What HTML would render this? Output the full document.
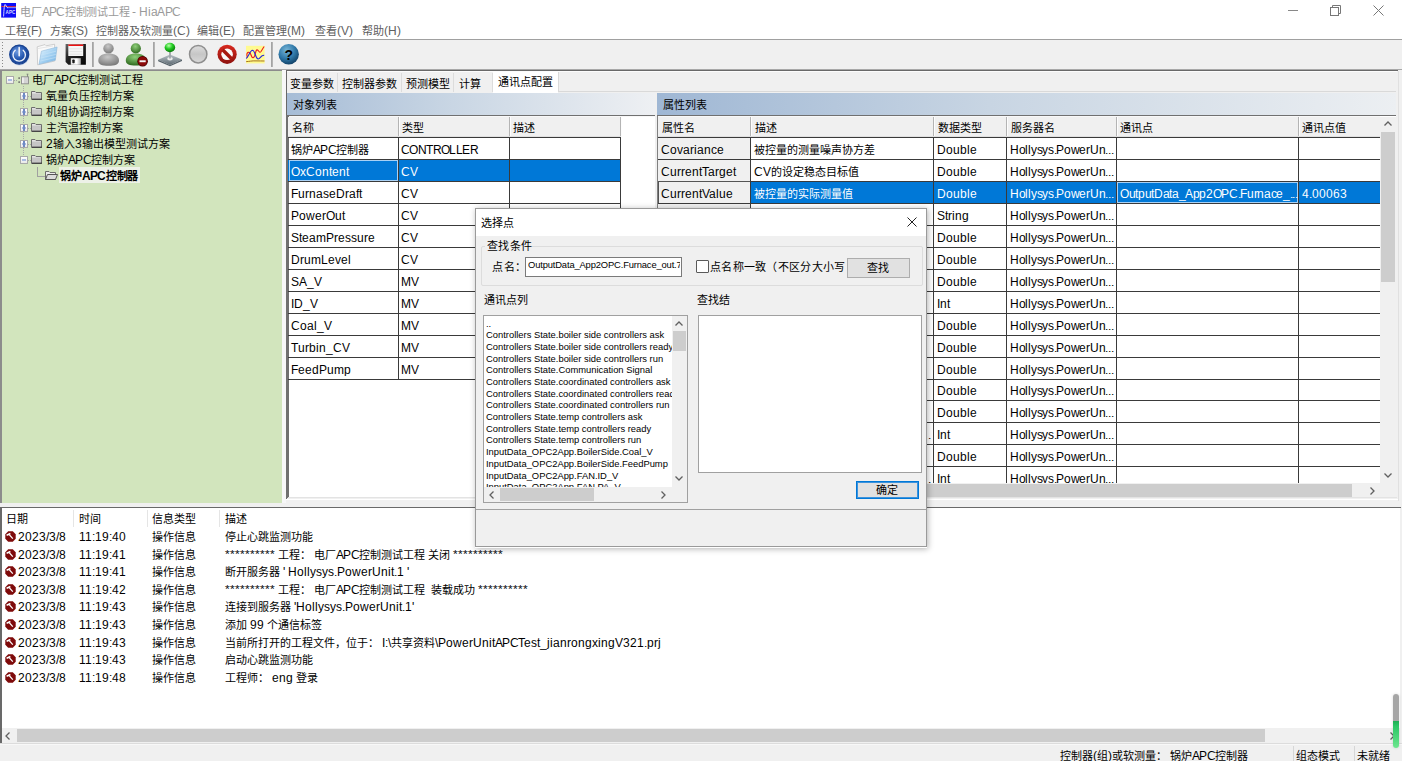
<!DOCTYPE html>
<html lang="zh-CN">
<head>
<meta charset="utf-8">
<style>
*{margin:0;padding:0;box-sizing:border-box}
html,body{width:1402px;height:761px;overflow:hidden;background:#f0f0f0}
body{position:relative;font-family:"UIL","Liberation Sans",sans-serif;font-size:11px;color:#000}
@font-face{font-family:"UIL";src:local("Liberation Sans");size-adjust:109%}
@font-face{font-family:"UILB";src:local("Liberation Sans Bold");size-adjust:109%}
.a{position:absolute}
.t{position:absolute;white-space:nowrap;line-height:16px;height:16px}
svg{position:absolute;overflow:visible}
</style>
</head>
<body>
<div class="a" style="left:0px;top:0px;width:1402px;height:39px;background:#fff;"></div>
<svg style="left:1px;top:3px" width="16" height="15" viewBox="1 3 16 15">
<rect x="1.2" y="3" width="14.8" height="14.6" fill="#0c0cf8"/>
<rect x="1.2" y="6.1" width="14.8" height="0.9" fill="#d23040"/>
<rect x="8" y="7.4" width="8" height="0.7" fill="#c8c8ff"/>
<path d="M3.6 16.5 C4 9 4.3 4.6 5 4.4 C5.8 4.3 6.4 7.8 8 8" stroke="#e8e8ff" stroke-width="0.9" fill="none"/>
<text x="5.6" y="14.2" font-size="4.6" fill="#d8d8ff" font-family="Liberation Sans" font-weight="bold">APC</text>
</svg>
<div class="t" style="left:20px;top:4px;font-size:11px;color:#9a9a9a;letter-spacing:-0.2px">电厂<span style="letter-spacing:-0.6px">APC</span>控制测试工程 - Hia<span style="letter-spacing:-0.6px">APC</span></div>
<div class="a" style="left:1288px;top:10px;width:10px;height:1px;background:#888;"></div>
<svg style="left:1330px;top:5px" width="11" height="11" viewBox="0 0 11 11"><rect x="0.5" y="2.5" width="8" height="8" fill="none" stroke="#777"/><path d="M2.5 2.5 V0.5 H10.5 V8.5 H8.5" fill="none" stroke="#777"/></svg>
<svg style="left:1373px;top:5px" width="11" height="11" viewBox="0 0 11 11"><path d="M0.5 0.5 L10.5 10.5 M10.5 0.5 L0.5 10.5" stroke="#777" stroke-width="1"/></svg>
<div class="t" style="left:5px;top:23px;font-size:11px;color:#606060;">工程(F)</div>
<div class="t" style="left:50px;top:23px;font-size:11px;color:#606060;">方案(S)</div>
<div class="t" style="left:96px;top:23px;font-size:11px;color:#606060;">控制器及软测量(C)</div>
<div class="t" style="left:197px;top:23px;font-size:11px;color:#606060;">编辑(E)</div>
<div class="t" style="left:243px;top:23px;font-size:11px;color:#606060;">配置管理(M)</div>
<div class="t" style="left:315px;top:23px;font-size:11px;color:#606060;">查看(V)</div>
<div class="t" style="left:362px;top:23px;font-size:11px;color:#606060;">帮助(H)</div>
<div class="a" style="left:0px;top:39px;width:1402px;height:1px;background:#a0a0a0;"></div>
<div class="a" style="left:0px;top:40px;width:1402px;height:30px;background:#f0f0f0;"></div>
<div class="a" style="left:2px;top:42px;width:1px;height:1px;background:#8a8a8a;"></div>
<div class="a" style="left:2px;top:45px;width:1px;height:1px;background:#8a8a8a;"></div>
<div class="a" style="left:2px;top:48px;width:1px;height:1px;background:#8a8a8a;"></div>
<div class="a" style="left:2px;top:51px;width:1px;height:1px;background:#8a8a8a;"></div>
<div class="a" style="left:2px;top:54px;width:1px;height:1px;background:#8a8a8a;"></div>
<div class="a" style="left:2px;top:57px;width:1px;height:1px;background:#8a8a8a;"></div>
<div class="a" style="left:2px;top:60px;width:1px;height:1px;background:#8a8a8a;"></div>
<div class="a" style="left:2px;top:63px;width:1px;height:1px;background:#8a8a8a;"></div>
<div class="a" style="left:2px;top:66px;width:1px;height:1px;background:#8a8a8a;"></div>
<div class="a" style="left:0px;top:69px;width:1402px;height:1px;background:#a8a8a8;"></div>
<div class="a" style="left:92px;top:42px;width:2px;height:25px;background:#b4b4b4;"></div>
<div class="a" style="left:92px;top:42px;width:1px;height:25px;background:#a4a4a4;"></div>
<div class="a" style="left:153px;top:42px;width:2px;height:25px;background:#b4b4b4;"></div>
<div class="a" style="left:153px;top:42px;width:1px;height:25px;background:#a4a4a4;"></div>
<div class="a" style="left:271px;top:42px;width:2px;height:25px;background:#b4b4b4;"></div>
<div class="a" style="left:271px;top:42px;width:1px;height:25px;background:#a4a4a4;"></div>
<svg style="left:0;top:40px" width="310" height="30" viewBox="0 40 310 30">
<defs>
<radialGradient id="gPow" cx="40%" cy="35%" r="70%"><stop offset="0" stop-color="#6f9be0"/><stop offset="0.55" stop-color="#2457b0"/><stop offset="1" stop-color="#173e8a"/></radialGradient>
<linearGradient id="gFold" x1="0" y1="0" x2="1" y2="1"><stop offset="0" stop-color="#e8f6ff"/><stop offset="0.5" stop-color="#a6d2f2"/><stop offset="1" stop-color="#6fb0e4"/></linearGradient>
<radialGradient id="gUser" cx="45%" cy="30%" r="70%"><stop offset="0" stop-color="#c8c8c8"/><stop offset="1" stop-color="#7a7a7a"/></radialGradient>
<radialGradient id="gUserG" cx="45%" cy="30%" r="70%"><stop offset="0" stop-color="#8fd07a"/><stop offset="1" stop-color="#2f6a1f"/></radialGradient>
<radialGradient id="gBall" cx="40%" cy="30%" r="70%"><stop offset="0" stop-color="#b8ffa8"/><stop offset="0.5" stop-color="#22cc22"/><stop offset="1" stop-color="#0a7a0a"/></radialGradient>
<linearGradient id="gBase" x1="0" y1="0" x2="0" y2="1"><stop offset="0" stop-color="#b9c2c8"/><stop offset="1" stop-color="#5e6a72"/></linearGradient>
<linearGradient id="gGrey" x1="0" y1="0" x2="0" y2="1"><stop offset="0" stop-color="#d6d6d6"/><stop offset="1" stop-color="#b4b4b4"/></linearGradient>
<radialGradient id="gRed" cx="45%" cy="35%" r="65%"><stop offset="0" stop-color="#e24a3a"/><stop offset="1" stop-color="#9e1410"/></radialGradient>
<radialGradient id="gHelp" cx="40%" cy="30%" r="70%"><stop offset="0" stop-color="#6aa8d0"/><stop offset="0.6" stop-color="#2a6a98"/><stop offset="1" stop-color="#153f63"/></radialGradient>
</defs>
<!-- power -->
<circle cx="19.4" cy="55" r="10.4" fill="#a9c0e6" opacity="0.55"/>
<circle cx="19.2" cy="54.6" r="9.5" fill="url(#gPow)"/>
<circle cx="19.2" cy="54.6" r="9.5" fill="none" stroke="#1a4390" stroke-width="1.2"/>
<path d="M15.2 50.2 A6.2 6.2 0 1 0 23.2 50.2" fill="none" stroke="#eef2fa" stroke-width="1.4" stroke-linecap="round"/>
<path d="M19.2 47.6 V55.8" stroke="#eef2fa" stroke-width="1.6" stroke-linecap="round"/>
<!-- folder -->
<path d="M37.2 46.8 L45 44.6 L46.2 45.8 L54.6 44.2 L54.8 61 L37.6 64.8 Z" fill="#fafafa" stroke="#bdbdbd" stroke-width="0.7"/>
<path d="M38 48.5 L53 46" stroke="#d0d0d0" stroke-width="0.5"/>
<path d="M41.4 51.2 L57.1 47 L55.3 60.2 L39 64.3 Z" fill="url(#gFold)" stroke="#8fb8da" stroke-width="0.6"/>
<path d="M41 55 L56 51.2 M40.6 58 L55.8 54.4 M40.2 61 L55.5 57.5" stroke="#c9e4f7" stroke-width="0.6"/>
<!-- floppy -->
<defs><linearGradient id="gFlop" x1="0" y1="0" x2="1" y2="1"><stop offset="0" stop-color="#6a6a6a"/><stop offset="0.35" stop-color="#262626"/><stop offset="1" stop-color="#050505"/></linearGradient>
<linearGradient id="gShut" x1="0" y1="0" x2="1" y2="0"><stop offset="0" stop-color="#e8e8e8"/><stop offset="0.6" stop-color="#ffffff"/><stop offset="1" stop-color="#a8a8a8"/></linearGradient></defs>
<path d="M65.6 44 H85.9 V64.8 H68.4 L65.6 62 Z" fill="url(#gFlop)"/>
<rect x="68.3" y="44.5" width="14.9" height="11.5" fill="#f6f6f6"/>
<rect x="68.3" y="44.5" width="14.9" height="1.5" fill="#ee1010"/>
<path d="M69.3 48.8 H82.2 M69.3 51.6 H82.2 M69.3 54.2 H82.2" stroke="#d6d6d6" stroke-width="0.6"/>
<rect x="70.8" y="58.2" width="10" height="6.6" fill="url(#gShut)"/>
<rect x="72.3" y="59.4" width="2.4" height="3.8" rx="0.8" fill="#1a1a1a"/>
<!-- grey user -->
<circle cx="108.5" cy="48.4" r="5.2" fill="url(#gUser)"/>
<path d="M98.3 60.5 C98.3 55.5 102.5 53.4 108.5 53.4 C114.6 53.4 119 55.5 119 60.5 C119 64.5 115 65.8 108.5 65.8 C102 65.8 98.3 64.5 98.3 60.5 Z" fill="url(#gUser)"/>
<!-- green user -->
<circle cx="135.8" cy="48.4" r="5.1" fill="url(#gUserG)"/>
<path d="M125.8 60.5 C125.8 55.5 129.8 53.4 135.8 53.4 C141.8 53.4 146 55.5 146 60.5 C146 64.5 142 65.5 135.8 65.5 C129.5 65.5 125.8 64.5 125.8 60.5 Z" fill="url(#gUserG)"/>
<circle cx="142.6" cy="61.2" r="5.3" fill="#4a0000"/>
<circle cx="142.6" cy="61.2" r="4.5" fill="#8c0a0a"/>
<rect x="139.5" y="60.3" width="6.2" height="1.9" fill="#f4f4f4"/>
<!-- joystick -->
<path d="M158.2 59.8 L170 54.4 L182 59.6 L170 65 Z" fill="url(#gBase)"/>
<path d="M158.2 59.8 L170 65 L182 59.6 L182 61 L170 66.3 L158.2 61.2 Z" fill="#56626a"/>
<ellipse cx="170" cy="58.8" rx="2.8" ry="1.8" fill="#ececec"/>
<rect x="169.1" y="51" width="1.8" height="7.5" fill="#a0a6aa"/>
<ellipse cx="169.9" cy="47.5" rx="5.3" ry="4.7" fill="url(#gBall)"/>
<!-- grey circle -->
<defs><linearGradient id="gGrey2" x1="0" y1="0" x2="0" y2="1"><stop offset="0" stop-color="#dedede"/><stop offset="0.5" stop-color="#c6c6c6"/><stop offset="1" stop-color="#d8d8d8"/></linearGradient></defs>
<circle cx="198.2" cy="54.2" r="8.7" fill="url(#gGrey2)" stroke="#8e8e8e" stroke-width="1.5"/>
<!-- red no -->
<defs><linearGradient id="gRed2" x1="0" y1="0" x2="0" y2="1"><stop offset="0" stop-color="#d8281e"/><stop offset="1" stop-color="#8e120e"/></linearGradient></defs>
<circle cx="227.1" cy="54.3" r="9.6" fill="url(#gRed2)"/>
<circle cx="227.1" cy="54.3" r="5.8" fill="#fafafa"/>
<path d="M222.6 49.8 L231.6 58.8" stroke="#a8180f" stroke-width="3.4"/>
<!-- chart -->
<rect x="246" y="45.8" width="18.6" height="17.6" fill="#fffa90"/>
<path d="M247.5 57.5 C246 54 247.5 51.5 249.5 52.5 C251.5 53.5 251 58.5 253.5 57.5 C256 56.5 255 49 257.5 50 C259 50.8 259.5 53.5 261 51.5 C262 50 263 48 264.2 46.5" fill="none" stroke="#ee1c1c" stroke-width="1.1"/>
<path d="M246.2 58.5 C248.5 57 250 50.5 252.5 50.3 C255 50.2 255.5 59 258.2 59 C260.5 59 260.5 55 264.2 55.2" fill="none" stroke="#2424dd" stroke-width="1.1"/>
<path d="M246.2 61.6 C249 61.6 252 60.6 256 60.9 C259 61.1 262 60.8 264.5 61" stroke="#a8741e" stroke-width="1" fill="none"/>
<!-- help -->
<defs><radialGradient id="gHelp2" cx="40%" cy="30%" r="75%"><stop offset="0" stop-color="#78b6d8"/><stop offset="0.55" stop-color="#2f78a8"/><stop offset="1" stop-color="#0e3b60"/></radialGradient></defs>
<circle cx="288.7" cy="54.3" r="10.2" fill="url(#gHelp2)"/>
<text x="288.9" y="59.6" font-size="14" font-weight="bold" font-family="Liberation Sans" text-anchor="middle" fill="#000">?</text>
</svg>
<div class="a" style="left:0px;top:70px;width:282px;height:434px;background:#8c8c8c;"></div>
<div class="a" style="left:2px;top:71px;width:280px;height:432px;background:#d2e5bd;"></div>
<div class="a" style="left:6px;top:76px;width:8px;height:8px;border:1px solid #a9a9a9;background:linear-gradient(180deg,#fff,#e8e8e8)"></div>
<div class="a" style="left:8px;top:79px;width:4px;height:2px;background:#a9bce2;"></div>
<div class="a" style="left:14px;top:80px;width:3px;height:1px;background:repeating-linear-gradient(90deg,#a8a8a8 0 1px,transparent 1px 2px)"></div>
<svg style="left:17px;top:73px" width="13" height="12" viewBox="0 0 13 12">
<rect x="4.5" y="3.8" width="7" height="7" fill="#d4d4d4" stroke="#8c8c8c" stroke-width="0.9"/>
<rect x="5.2" y="4.5" width="1.5" height="5.6" fill="#f4f4f4"/>
<rect x="1.3" y="4.4" width="1.7" height="1.4" fill="#666"/><rect x="1.3" y="8.4" width="1.7" height="1.4" fill="#666"/>
<path d="M10.5 3.8 V1.2 M9.6 1.2 H11.4" stroke="#777" stroke-width="0.8"/>
</svg>
<div class="t" style="left:32px;top:72px;font-size:11px;color:#000;">电厂<span style="letter-spacing:-0.6px">APC</span>控制测试工程</div>
<div class="a" style="left:23px;top:86px;width:1px;height:74px;background:repeating-linear-gradient(180deg,#a8a8a8 0 1px,transparent 1px 2px)"></div>
<div class="a" style="left:20px;top:92px;width:8px;height:8px;border:1px solid #a9a9a9;background:linear-gradient(180deg,#fff,#e8e8e8)"></div>
<div class="a" style="left:22px;top:95px;width:4px;height:2px;background:#a9bce2;"></div>
<div class="a" style="left:23px;top:93px;width:2px;height:6px;background:#6f8ac4;"></div>
<div class="a" style="left:28px;top:96px;width:3px;height:1px;background:repeating-linear-gradient(90deg,#a8a8a8 0 1px,transparent 1px 2px)"></div>
<svg style="left:31px;top:90px" width="12" height="10" viewBox="0 0 12 10">
<path d="M0.5 1.5 H4 L5 2.5 H10.5 V9.5 H0.5 Z" fill="#e4e4e4" stroke="#6e6e6e" stroke-width="1"/>
<path d="M1 3.5 H10 V8.8 H1 Z" fill="#c6c6c6"/>
<path d="M1 9.2 H11" stroke="#3c3c3c" stroke-width="1.2"/>
</svg>
<div class="t" style="left:46px;top:88px;font-size:11px;color:#000;">氧量负压控制方案</div>
<div class="a" style="left:20px;top:108px;width:8px;height:8px;border:1px solid #a9a9a9;background:linear-gradient(180deg,#fff,#e8e8e8)"></div>
<div class="a" style="left:22px;top:111px;width:4px;height:2px;background:#a9bce2;"></div>
<div class="a" style="left:23px;top:109px;width:2px;height:6px;background:#6f8ac4;"></div>
<div class="a" style="left:28px;top:112px;width:3px;height:1px;background:repeating-linear-gradient(90deg,#a8a8a8 0 1px,transparent 1px 2px)"></div>
<svg style="left:31px;top:106px" width="12" height="10" viewBox="0 0 12 10">
<path d="M0.5 1.5 H4 L5 2.5 H10.5 V9.5 H0.5 Z" fill="#e4e4e4" stroke="#6e6e6e" stroke-width="1"/>
<path d="M1 3.5 H10 V8.8 H1 Z" fill="#c6c6c6"/>
<path d="M1 9.2 H11" stroke="#3c3c3c" stroke-width="1.2"/>
</svg>
<div class="t" style="left:46px;top:104px;font-size:11px;color:#000;">机组协调控制方案</div>
<div class="a" style="left:20px;top:124px;width:8px;height:8px;border:1px solid #a9a9a9;background:linear-gradient(180deg,#fff,#e8e8e8)"></div>
<div class="a" style="left:22px;top:127px;width:4px;height:2px;background:#a9bce2;"></div>
<div class="a" style="left:23px;top:125px;width:2px;height:6px;background:#6f8ac4;"></div>
<div class="a" style="left:28px;top:128px;width:3px;height:1px;background:repeating-linear-gradient(90deg,#a8a8a8 0 1px,transparent 1px 2px)"></div>
<svg style="left:31px;top:122px" width="12" height="10" viewBox="0 0 12 10">
<path d="M0.5 1.5 H4 L5 2.5 H10.5 V9.5 H0.5 Z" fill="#e4e4e4" stroke="#6e6e6e" stroke-width="1"/>
<path d="M1 3.5 H10 V8.8 H1 Z" fill="#c6c6c6"/>
<path d="M1 9.2 H11" stroke="#3c3c3c" stroke-width="1.2"/>
</svg>
<div class="t" style="left:46px;top:120px;font-size:11px;color:#000;">主汽温控制方案</div>
<div class="a" style="left:20px;top:140px;width:8px;height:8px;border:1px solid #a9a9a9;background:linear-gradient(180deg,#fff,#e8e8e8)"></div>
<div class="a" style="left:22px;top:143px;width:4px;height:2px;background:#a9bce2;"></div>
<div class="a" style="left:23px;top:141px;width:2px;height:6px;background:#6f8ac4;"></div>
<div class="a" style="left:28px;top:144px;width:3px;height:1px;background:repeating-linear-gradient(90deg,#a8a8a8 0 1px,transparent 1px 2px)"></div>
<svg style="left:31px;top:138px" width="12" height="10" viewBox="0 0 12 10">
<path d="M0.5 1.5 H4 L5 2.5 H10.5 V9.5 H0.5 Z" fill="#e4e4e4" stroke="#6e6e6e" stroke-width="1"/>
<path d="M1 3.5 H10 V8.8 H1 Z" fill="#c6c6c6"/>
<path d="M1 9.2 H11" stroke="#3c3c3c" stroke-width="1.2"/>
</svg>
<div class="t" style="left:46px;top:136px;font-size:11px;color:#000;">2输入3输出模型测试方案</div>
<div class="a" style="left:20px;top:156px;width:8px;height:8px;border:1px solid #a9a9a9;background:linear-gradient(180deg,#fff,#e8e8e8)"></div>
<div class="a" style="left:22px;top:159px;width:4px;height:2px;background:#a9bce2;"></div>
<div class="a" style="left:28px;top:160px;width:3px;height:1px;background:repeating-linear-gradient(90deg,#a8a8a8 0 1px,transparent 1px 2px)"></div>
<svg style="left:31px;top:154px" width="12" height="10" viewBox="0 0 12 10">
<path d="M0.5 1.5 H4 L5 2.5 H10.5 V9.5 H0.5 Z" fill="#e4e4e4" stroke="#6e6e6e" stroke-width="1"/>
<path d="M1 3.5 H10 V8.8 H1 Z" fill="#c6c6c6"/>
<path d="M1 9.2 H11" stroke="#3c3c3c" stroke-width="1.2"/>
</svg>
<div class="t" style="left:46px;top:152px;font-size:11px;color:#000;">锅炉<span style="letter-spacing:-0.6px">APC</span>控制方案</div>
<div class="a" style="left:37px;top:167px;width:1px;height:10px;background:#a0a0a0;"></div>
<div class="a" style="left:37px;top:176px;width:9px;height:1px;background:#a0a0a0;"></div>
<div class="a" style="left:59px;top:167px;width:81px;height:16px;background:#edf1e8;"></div>
<svg style="left:45px;top:170px" width="13" height="11" viewBox="0 0 13 11">
<path d="M0.5 1.5 H4 L5 2.5 H10.5 V9.5 H0.5 Z" fill="#ececec" stroke="#6e6e6e"/>
<path d="M2.5 4.5 H12.5 L10.5 9.5 H0.5 Z" fill="#dcdcdc" stroke="#555"/>
</svg>
<div class="t" style="left:60px;top:168px;font-size:11px;color:#000;font-weight:bold;letter-spacing:-0.2px;font-family:'UILB','Liberation Sans',sans-serif">锅炉<span style="letter-spacing:-0.6px">APC</span>控制器</div>
<div class="a" style="left:282px;top:70px;width:4px;height:434px;background:#f7f7f8;"></div>
<div class="a" style="left:286px;top:70px;width:1112px;height:1px;background:#696969;"></div>
<div class="a" style="left:286px;top:70px;width:1px;height:429px;background:#696969;"></div>
<div class="a" style="left:287px;top:71px;width:1111px;height:432px;background:#f0f0f0;"></div>
<div class="a" style="left:1398px;top:71px;width:1px;height:430px;background:#e0e0e0;"></div>
<div class="t" style="left:290px;top:76px;font-size:11px;color:#000;">变量参数</div>
<div class="a" style="left:337px;top:73px;width:1px;height:19px;background:#dcdcdc;"></div>
<div class="t" style="left:342px;top:76px;font-size:11px;color:#000;">控制器参数</div>
<div class="a" style="left:401px;top:73px;width:1px;height:19px;background:#dcdcdc;"></div>
<div class="t" style="left:406px;top:76px;font-size:11px;color:#000;">预测模型</div>
<div class="a" style="left:453px;top:73px;width:1px;height:19px;background:#dcdcdc;"></div>
<div class="t" style="left:459px;top:76px;font-size:11px;color:#000;">计算</div>
<div class="a" style="left:492px;top:73px;width:1px;height:19px;background:#dcdcdc;"></div>
<div class="a" style="left:287px;top:71px;width:1110px;height:1px;background:#fcfcfc;"></div>
<div class="a" style="left:558px;top:72px;width:1px;height:20px;background:#d9d9d9;"></div>
<div class="a" style="left:558px;top:91px;width:838px;height:1px;background:#d9d9d9;"></div>
<div class="a" style="left:493px;top:72px;width:65px;height:21px;background:#fff;"></div>
<div class="t" style="left:498px;top:74px;font-size:11px;color:#000;">通讯点配置</div>
<div class="a" style="left:287px;top:93px;width:368px;height:22px;background:linear-gradient(90deg,#a6bcd6 0%,#c9d6e4 45%,#eef0f3 100%);"></div>
<div class="t" style="left:293px;top:97px;font-size:11px;color:#000;">对象列表</div>
<div class="a" style="left:657px;top:93px;width:739px;height:22px;background:linear-gradient(90deg,#9fb7d4 0%,#c8d5e3 45%,#eceff2 100%);"></div>
<div class="t" style="left:663px;top:97px;font-size:11px;color:#000;">属性列表</div>
<div class="a" style="left:288px;top:115px;width:367px;height:383px;background:#fff;"></div>
<div class="a" style="left:286px;top:115px;width:3px;height:383px;background:#707070;"></div>
<div class="a" style="left:286px;top:115px;width:369px;height:1px;background:#707070;"></div>
<div class="a" style="left:289px;top:116px;width:366px;height:1px;background:#f8f8f8;"></div>
<div class="a" style="left:288px;top:117px;width:333px;height:20px;background:#f0f0f0;"></div>
<div class="a" style="left:398px;top:117px;width:1px;height:20px;background:#b4b4b4;"></div>
<div class="a" style="left:399px;top:117px;width:1px;height:20px;background:#fdfdfd;"></div>
<div class="a" style="left:509px;top:117px;width:1px;height:20px;background:#b4b4b4;"></div>
<div class="a" style="left:510px;top:117px;width:1px;height:20px;background:#fdfdfd;"></div>
<div class="a" style="left:620px;top:117px;width:1px;height:20px;background:#b4b4b4;"></div>
<div class="a" style="left:621px;top:117px;width:1px;height:20px;background:#fdfdfd;"></div>
<div class="a" style="left:288px;top:136px;width:333px;height:1px;background:#e0e0e0;"></div>
<div class="t" style="left:292px;top:120px;font-size:11px;color:#000;">名称</div>
<div class="t" style="left:402px;top:120px;font-size:11px;color:#000;">类型</div>
<div class="t" style="left:513px;top:120px;font-size:11px;color:#000;">描述</div>
<div class="t" style="left:291px;top:142px;font-size:11px;color:#000;">锅炉<span style="letter-spacing:-0.6px">APC</span>控制器</div>
<div class="t" style="left:401px;top:142px;font-size:11px;color:#000;letter-spacing:-0.6px">CONTROLLER</div>
<div class="a" style="left:288px;top:159px;width:333px;height:1px;background:#3a3a3a;"></div>
<div class="a" style="left:288px;top:160px;width:333px;height:21px;background:#0078d7;"></div>
<div class="a" style="left:289px;top:160px;width:109px;height:21px;border:1px solid #a9d1f5"></div>
<div class="t" style="left:291px;top:164px;font-size:11px;color:#fff;">OxContent</div>
<div class="t" style="left:401px;top:164px;font-size:11px;color:#fff;">CV</div>
<div class="a" style="left:288px;top:181px;width:333px;height:1px;background:#3a3a3a;"></div>
<div class="t" style="left:291px;top:186px;font-size:11px;color:#000;">FurnaseDraft</div>
<div class="t" style="left:401px;top:186px;font-size:11px;color:#000;">CV</div>
<div class="a" style="left:288px;top:203px;width:333px;height:1px;background:#3a3a3a;"></div>
<div class="t" style="left:291px;top:208px;font-size:11px;color:#000;">PowerOut</div>
<div class="t" style="left:401px;top:208px;font-size:11px;color:#000;">CV</div>
<div class="a" style="left:288px;top:225px;width:333px;height:1px;background:#3a3a3a;"></div>
<div class="t" style="left:291px;top:230px;font-size:11px;color:#000;">SteamPressure</div>
<div class="t" style="left:401px;top:230px;font-size:11px;color:#000;">CV</div>
<div class="a" style="left:288px;top:247px;width:333px;height:1px;background:#3a3a3a;"></div>
<div class="t" style="left:291px;top:252px;font-size:11px;color:#000;">DrumLevel</div>
<div class="t" style="left:401px;top:252px;font-size:11px;color:#000;">CV</div>
<div class="a" style="left:288px;top:269px;width:333px;height:1px;background:#3a3a3a;"></div>
<div class="t" style="left:291px;top:274px;font-size:11px;color:#000;">SA_V</div>
<div class="t" style="left:401px;top:274px;font-size:11px;color:#000;">MV</div>
<div class="a" style="left:288px;top:291px;width:333px;height:1px;background:#3a3a3a;"></div>
<div class="t" style="left:291px;top:296px;font-size:11px;color:#000;">ID_V</div>
<div class="t" style="left:401px;top:296px;font-size:11px;color:#000;">MV</div>
<div class="a" style="left:288px;top:313px;width:333px;height:1px;background:#3a3a3a;"></div>
<div class="t" style="left:291px;top:318px;font-size:11px;color:#000;">Coal_V</div>
<div class="t" style="left:401px;top:318px;font-size:11px;color:#000;">MV</div>
<div class="a" style="left:288px;top:335px;width:333px;height:1px;background:#3a3a3a;"></div>
<div class="t" style="left:291px;top:340px;font-size:11px;color:#000;">Turbin_CV</div>
<div class="t" style="left:401px;top:340px;font-size:11px;color:#000;">MV</div>
<div class="a" style="left:288px;top:357px;width:333px;height:1px;background:#3a3a3a;"></div>
<div class="t" style="left:291px;top:362px;font-size:11px;color:#000;">FeedPump</div>
<div class="t" style="left:401px;top:362px;font-size:11px;color:#000;">MV</div>
<div class="a" style="left:288px;top:379px;width:333px;height:1px;background:#3a3a3a;"></div>
<div class="a" style="left:288px;top:137px;width:333px;height:1px;background:#3a3a3a;"></div>
<div class="a" style="left:398px;top:137px;width:1px;height:243px;background:#3a3a3a;"></div>
<div class="a" style="left:509px;top:137px;width:1px;height:243px;background:#3a3a3a;"></div>
<div class="a" style="left:620px;top:137px;width:1px;height:243px;background:#3a3a3a;"></div>
<div class="a" style="left:288px;top:497px;width:367px;height:1px;background:#e3e3e3;"></div>
<div class="a" style="left:286px;top:499px;width:369px;height:1px;background:#fff;"></div>
<div class="a" style="left:657px;top:115px;width:739px;height:383px;background:#fff;"></div>
<div class="a" style="left:657px;top:115px;width:1px;height:383px;background:#808080;"></div>
<div class="a" style="left:657px;top:115px;width:739px;height:1px;background:#707070;"></div>
<div class="a" style="left:658px;top:116px;width:722px;height:1px;background:#f8f8f8;"></div>
<div class="a" style="left:658px;top:117px;width:722px;height:20px;background:#f0f0f0;"></div>
<div class="a" style="left:750px;top:117px;width:1px;height:20px;background:#b4b4b4;"></div>
<div class="a" style="left:751px;top:117px;width:1px;height:20px;background:#fdfdfd;"></div>
<div class="a" style="left:933px;top:117px;width:1px;height:20px;background:#b4b4b4;"></div>
<div class="a" style="left:934px;top:117px;width:1px;height:20px;background:#fdfdfd;"></div>
<div class="a" style="left:1006px;top:117px;width:1px;height:20px;background:#b4b4b4;"></div>
<div class="a" style="left:1007px;top:117px;width:1px;height:20px;background:#fdfdfd;"></div>
<div class="a" style="left:1116px;top:117px;width:1px;height:20px;background:#b4b4b4;"></div>
<div class="a" style="left:1117px;top:117px;width:1px;height:20px;background:#fdfdfd;"></div>
<div class="a" style="left:1298px;top:117px;width:1px;height:20px;background:#b4b4b4;"></div>
<div class="a" style="left:1299px;top:117px;width:1px;height:20px;background:#fdfdfd;"></div>
<div class="a" style="left:658px;top:136px;width:722px;height:1px;background:#e0e0e0;"></div>
<div class="t" style="left:662px;top:120px;font-size:11px;color:#000;">属性名</div>
<div class="t" style="left:755px;top:120px;font-size:11px;color:#000;">描述</div>
<div class="t" style="left:938px;top:120px;font-size:11px;color:#000;">数据类型</div>
<div class="t" style="left:1011px;top:120px;font-size:11px;color:#000;">服务器名</div>
<div class="t" style="left:1120px;top:120px;font-size:11px;color:#000;">通讯点</div>
<div class="t" style="left:1302px;top:120px;font-size:11px;color:#000;">通讯点值</div>
<div class="a" style="left:658px;top:138px;width:93px;height:21px;background:#f0f0f0;"></div>
<div class="t" style="left:661px;top:142px;font-size:11px;color:#000;">Covariance</div>
<div class="t" style="left:754px;top:142px;font-size:11px;color:#000;">被控量的测量噪声协方差</div>
<div class="t" style="left:937px;top:142px;font-size:11px;color:#000;">Double</div>
<div class="t" style="left:1010px;top:142px;font-size:11px;color:#000;letter-spacing:-0.3px">Hollysys.PowerUn...</div>
<div class="a" style="left:658px;top:159px;width:722px;height:1px;background:#3a3a3a;"></div>
<div class="a" style="left:658px;top:160px;width:93px;height:21px;background:#f0f0f0;"></div>
<div class="t" style="left:661px;top:164px;font-size:11px;color:#000;">CurrentTarget</div>
<div class="t" style="left:754px;top:164px;font-size:11px;color:#000;">CV的设定稳态目标值</div>
<div class="t" style="left:937px;top:164px;font-size:11px;color:#000;">Double</div>
<div class="t" style="left:1010px;top:164px;font-size:11px;color:#000;letter-spacing:-0.3px">Hollysys.PowerUn...</div>
<div class="a" style="left:658px;top:181px;width:722px;height:1px;background:#3a3a3a;"></div>
<div class="a" style="left:658px;top:182px;width:93px;height:21px;background:#f0f0f0;"></div>
<div class="a" style="left:751px;top:182px;width:629px;height:21px;background:#0078d7;"></div>
<div class="a" style="left:1117px;top:182px;width:181px;height:21px;border:1px solid #a9d1f5"></div>
<div class="a" style="left:658px;top:181px;width:93px;height:22px;border-left:1px solid #555;border-top:1px solid #555"></div>
<div class="t" style="left:661px;top:186px;font-size:11px;color:#000;">CurrentValue</div>
<div class="t" style="left:754px;top:186px;font-size:11px;color:#fff;">被控量的实际测量值</div>
<div class="t" style="left:937px;top:186px;font-size:11px;color:#fff;">Double</div>
<div class="t" style="left:1010px;top:186px;font-size:11px;color:#fff;letter-spacing:-0.3px">Hollysys.PowerUn...</div>
<div class="t" style="left:1120px;top:186px;font-size:11px;color:#fff;letter-spacing:-0.35px">OutputData_App2OPC.Furnace_...</div>
<div class="t" style="left:1302px;top:186px;font-size:11px;color:#fff;">4.00063</div>
<div class="a" style="left:658px;top:203px;width:722px;height:1px;background:#3a3a3a;"></div>
<div class="a" style="left:658px;top:204px;width:93px;height:21px;background:#f0f0f0;"></div>
<div class="t" style="left:937px;top:208px;font-size:11px;color:#000;">String</div>
<div class="t" style="left:1010px;top:208px;font-size:11px;color:#000;letter-spacing:-0.3px">Hollysys.PowerUn...</div>
<div class="a" style="left:658px;top:225px;width:722px;height:1px;background:#3a3a3a;"></div>
<div class="a" style="left:658px;top:226px;width:93px;height:21px;background:#f0f0f0;"></div>
<div class="t" style="left:937px;top:230px;font-size:11px;color:#000;">Double</div>
<div class="t" style="left:1010px;top:230px;font-size:11px;color:#000;letter-spacing:-0.3px">Hollysys.PowerUn...</div>
<div class="a" style="left:658px;top:247px;width:722px;height:1px;background:#3a3a3a;"></div>
<div class="a" style="left:658px;top:248px;width:93px;height:21px;background:#f0f0f0;"></div>
<div class="t" style="left:937px;top:252px;font-size:11px;color:#000;">Double</div>
<div class="t" style="left:1010px;top:252px;font-size:11px;color:#000;letter-spacing:-0.3px">Hollysys.PowerUn...</div>
<div class="a" style="left:658px;top:269px;width:722px;height:1px;background:#3a3a3a;"></div>
<div class="a" style="left:658px;top:270px;width:93px;height:21px;background:#f0f0f0;"></div>
<div class="t" style="left:937px;top:274px;font-size:11px;color:#000;">Double</div>
<div class="t" style="left:1010px;top:274px;font-size:11px;color:#000;letter-spacing:-0.3px">Hollysys.PowerUn...</div>
<div class="a" style="left:658px;top:291px;width:722px;height:1px;background:#3a3a3a;"></div>
<div class="a" style="left:658px;top:292px;width:93px;height:21px;background:#f0f0f0;"></div>
<div class="t" style="left:937px;top:296px;font-size:11px;color:#000;">Int</div>
<div class="t" style="left:1010px;top:296px;font-size:11px;color:#000;letter-spacing:-0.3px">Hollysys.PowerUn...</div>
<div class="a" style="left:658px;top:313px;width:722px;height:1px;background:#3a3a3a;"></div>
<div class="a" style="left:658px;top:314px;width:93px;height:21px;background:#f0f0f0;"></div>
<div class="t" style="left:937px;top:318px;font-size:11px;color:#000;">Double</div>
<div class="t" style="left:1010px;top:318px;font-size:11px;color:#000;letter-spacing:-0.3px">Hollysys.PowerUn...</div>
<div class="a" style="left:658px;top:335px;width:722px;height:1px;background:#3a3a3a;"></div>
<div class="a" style="left:658px;top:336px;width:93px;height:21px;background:#f0f0f0;"></div>
<div class="t" style="left:937px;top:340px;font-size:11px;color:#000;">Double</div>
<div class="t" style="left:1010px;top:340px;font-size:11px;color:#000;letter-spacing:-0.3px">Hollysys.PowerUn...</div>
<div class="a" style="left:658px;top:357px;width:722px;height:1px;background:#3a3a3a;"></div>
<div class="a" style="left:658px;top:358px;width:93px;height:21px;background:#f0f0f0;"></div>
<div class="t" style="left:937px;top:362px;font-size:11px;color:#000;">Double</div>
<div class="t" style="left:1010px;top:362px;font-size:11px;color:#000;letter-spacing:-0.3px">Hollysys.PowerUn...</div>
<div class="a" style="left:658px;top:379px;width:722px;height:1px;background:#3a3a3a;"></div>
<div class="a" style="left:658px;top:380px;width:93px;height:20px;background:#f0f0f0;"></div>
<div class="t" style="left:937px;top:383px;font-size:11px;color:#000;">Double</div>
<div class="t" style="left:1010px;top:383px;font-size:11px;color:#000;letter-spacing:-0.3px">Hollysys.PowerUn...</div>
<div class="a" style="left:658px;top:400px;width:722px;height:1px;background:#3a3a3a;"></div>
<div class="a" style="left:658px;top:401px;width:93px;height:21px;background:#f0f0f0;"></div>
<div class="t" style="left:937px;top:405px;font-size:11px;color:#000;">Double</div>
<div class="t" style="left:1010px;top:405px;font-size:11px;color:#000;letter-spacing:-0.3px">Hollysys.PowerUn...</div>
<div class="a" style="left:658px;top:422px;width:722px;height:1px;background:#3a3a3a;"></div>
<div class="a" style="left:658px;top:423px;width:93px;height:21px;background:#f0f0f0;"></div>
<div class="t" style="left:928px;top:427px;font-size:11px;color:#000;">.</div>
<div class="t" style="left:937px;top:427px;font-size:11px;color:#000;">Int</div>
<div class="t" style="left:1010px;top:427px;font-size:11px;color:#000;letter-spacing:-0.3px">Hollysys.PowerUn...</div>
<div class="a" style="left:658px;top:444px;width:722px;height:1px;background:#3a3a3a;"></div>
<div class="a" style="left:658px;top:445px;width:93px;height:21px;background:#f0f0f0;"></div>
<div class="t" style="left:937px;top:449px;font-size:11px;color:#000;">Double</div>
<div class="t" style="left:1010px;top:449px;font-size:11px;color:#000;letter-spacing:-0.3px">Hollysys.PowerUn...</div>
<div class="a" style="left:658px;top:466px;width:722px;height:1px;background:#3a3a3a;"></div>
<div class="a" style="left:658px;top:467px;width:93px;height:16px;background:#f0f0f0;"></div>
<div class="t" style="left:928px;top:471px;font-size:11px;color:#000;">.</div>
<div class="t" style="left:937px;top:471px;font-size:11px;color:#000;">Int</div>
<div class="t" style="left:1010px;top:471px;font-size:11px;color:#000;letter-spacing:-0.3px">Hollysys.PowerUn...</div>
<div class="a" style="left:658px;top:137px;width:722px;height:1px;background:#3a3a3a;"></div>
<div class="a" style="left:750px;top:137px;width:1px;height:346px;background:#3a3a3a;"></div>
<div class="a" style="left:933px;top:137px;width:1px;height:346px;background:#3a3a3a;"></div>
<div class="a" style="left:1006px;top:137px;width:1px;height:346px;background:#3a3a3a;"></div>
<div class="a" style="left:1116px;top:137px;width:1px;height:346px;background:#3a3a3a;"></div>
<div class="a" style="left:1298px;top:137px;width:1px;height:346px;background:#3a3a3a;"></div>
<div class="a" style="left:1380px;top:117px;width:16px;height:366px;background:#f0f0f0;"></div>
<div class="a" style="left:1381px;top:132px;width:14px;height:150px;background:#cdcdcd;"></div>
<svg style="left:1383px;top:120px" width="10" height="8" viewBox="0 0 10 8"><path d="M1.5 5.5 L5 2 L8.5 5.5" fill="none" stroke="#606060" stroke-width="1.3"/></svg>
<svg style="left:1383px;top:471px" width="10" height="8" viewBox="0 0 10 8"><path d="M1.5 2.5 L5 6 L8.5 2.5" fill="none" stroke="#606060" stroke-width="1.3"/></svg>
<div class="a" style="left:658px;top:483px;width:738px;height:15px;background:#f0f0f0;"></div>
<div class="a" style="left:658px;top:484px;width:694px;height:13px;background:#cdcdcd;"></div>
<svg style="left:1368px;top:486px" width="8" height="10" viewBox="0 0 8 10"><path d="M2.5 1.5 L6 5 L2.5 8.5" fill="none" stroke="#606060" stroke-width="1.3"/></svg>
<div class="a" style="left:657px;top:497px;width:740px;height:1px;background:#e3e3e3;"></div>
<div class="a" style="left:655px;top:499px;width:743px;height:1px;background:#fff;"></div>
<div class="a" style="left:0px;top:503px;width:1402px;height:4px;background:#f0f0f0;"></div>
<div class="a" style="left:0px;top:507px;width:1401px;height:1px;background:#696969;"></div>
<div class="a" style="left:0px;top:507px;width:2px;height:238px;background:#696969;"></div>
<div class="a" style="left:2px;top:508px;width:1399px;height:237px;background:#fff;"></div>
<div class="a" style="left:1400px;top:508px;width:1px;height:237px;background:#f0f0f0;"></div>
<div class="t" style="left:6px;top:511px;font-size:11px;color:#000;">日期</div>
<div class="t" style="left:79px;top:511px;font-size:11px;color:#000;">时间</div>
<div class="t" style="left:152px;top:511px;font-size:11px;color:#000;">信息类型</div>
<div class="t" style="left:225px;top:511px;font-size:11px;color:#000;">描述</div>
<div class="a" style="left:73px;top:510px;width:1px;height:17px;background:#e5e5e5;"></div>
<div class="a" style="left:147px;top:510px;width:1px;height:17px;background:#e5e5e5;"></div>
<div class="a" style="left:219px;top:510px;width:1px;height:17px;background:#e5e5e5;"></div>
<svg style="left:5px;top:531px" width="11" height="11" viewBox="0 0 11 11"><path d="M3.2 0.3 H7.8 L10.7 3.2 V7.8 L7.8 10.7 H3.2 L0.3 7.8 V3.2 Z" fill="#7e0a0a"/><path d="M1.6 4.2 L5.4 2.6" stroke="#fff" stroke-width="1.6"/><path d="M4.2 3.6 L7.8 7.6" stroke="#fff" stroke-width="1.3"/></svg>
<div class="t" style="left:18px;top:529px;font-size:11px;color:#000;">2023/3/8</div>
<div class="t" style="left:79px;top:529px;font-size:11px;color:#000;">11:19:40</div>
<div class="t" style="left:152px;top:529px;font-size:11px;color:#000;">操作信息</div>
<div class="t" style="left:225px;top:529px;font-size:11px;color:#000;">停止心跳监测功能</div>
<svg style="left:5px;top:549px" width="11" height="11" viewBox="0 0 11 11"><path d="M3.2 0.3 H7.8 L10.7 3.2 V7.8 L7.8 10.7 H3.2 L0.3 7.8 V3.2 Z" fill="#7e0a0a"/><path d="M1.6 4.2 L5.4 2.6" stroke="#fff" stroke-width="1.6"/><path d="M4.2 3.6 L7.8 7.6" stroke="#fff" stroke-width="1.3"/></svg>
<div class="t" style="left:18px;top:547px;font-size:11px;color:#000;">2023/3/8</div>
<div class="t" style="left:79px;top:547px;font-size:11px;color:#000;">11:19:41</div>
<div class="t" style="left:152px;top:547px;font-size:11px;color:#000;">操作信息</div>
<div class="t" style="left:225px;top:547px;font-size:11px;color:#000;">********** 工程：&nbsp;电厂<span style="letter-spacing:-0.6px">APC</span>控制测试工程 关闭 **********</div>
<svg style="left:5px;top:566px" width="11" height="11" viewBox="0 0 11 11"><path d="M3.2 0.3 H7.8 L10.7 3.2 V7.8 L7.8 10.7 H3.2 L0.3 7.8 V3.2 Z" fill="#7e0a0a"/><path d="M1.6 4.2 L5.4 2.6" stroke="#fff" stroke-width="1.6"/><path d="M4.2 3.6 L7.8 7.6" stroke="#fff" stroke-width="1.3"/></svg>
<div class="t" style="left:18px;top:564px;font-size:11px;color:#000;">2023/3/8</div>
<div class="t" style="left:79px;top:564px;font-size:11px;color:#000;">11:19:41</div>
<div class="t" style="left:152px;top:564px;font-size:11px;color:#000;">操作信息</div>
<div class="t" style="left:225px;top:564px;font-size:11px;color:#000;">断开服务器 ' Hollysys.PowerUnit.1 '</div>
<svg style="left:5px;top:584px" width="11" height="11" viewBox="0 0 11 11"><path d="M3.2 0.3 H7.8 L10.7 3.2 V7.8 L7.8 10.7 H3.2 L0.3 7.8 V3.2 Z" fill="#7e0a0a"/><path d="M1.6 4.2 L5.4 2.6" stroke="#fff" stroke-width="1.6"/><path d="M4.2 3.6 L7.8 7.6" stroke="#fff" stroke-width="1.3"/></svg>
<div class="t" style="left:18px;top:582px;font-size:11px;color:#000;">2023/3/8</div>
<div class="t" style="left:79px;top:582px;font-size:11px;color:#000;">11:19:42</div>
<div class="t" style="left:152px;top:582px;font-size:11px;color:#000;">操作信息</div>
<div class="t" style="left:225px;top:582px;font-size:11px;color:#000;">********** 工程：&nbsp;电厂<span style="letter-spacing:-0.6px">APC</span>控制测试工程&nbsp; 装载成功 **********</div>
<svg style="left:5px;top:601px" width="11" height="11" viewBox="0 0 11 11"><path d="M3.2 0.3 H7.8 L10.7 3.2 V7.8 L7.8 10.7 H3.2 L0.3 7.8 V3.2 Z" fill="#7e0a0a"/><path d="M1.6 4.2 L5.4 2.6" stroke="#fff" stroke-width="1.6"/><path d="M4.2 3.6 L7.8 7.6" stroke="#fff" stroke-width="1.3"/></svg>
<div class="t" style="left:18px;top:599px;font-size:11px;color:#000;">2023/3/8</div>
<div class="t" style="left:79px;top:599px;font-size:11px;color:#000;">11:19:43</div>
<div class="t" style="left:152px;top:599px;font-size:11px;color:#000;">操作信息</div>
<div class="t" style="left:225px;top:599px;font-size:11px;color:#000;">连接到服务器 'Hollysys.PowerUnit.1'</div>
<svg style="left:5px;top:619px" width="11" height="11" viewBox="0 0 11 11"><path d="M3.2 0.3 H7.8 L10.7 3.2 V7.8 L7.8 10.7 H3.2 L0.3 7.8 V3.2 Z" fill="#7e0a0a"/><path d="M1.6 4.2 L5.4 2.6" stroke="#fff" stroke-width="1.6"/><path d="M4.2 3.6 L7.8 7.6" stroke="#fff" stroke-width="1.3"/></svg>
<div class="t" style="left:18px;top:617px;font-size:11px;color:#000;">2023/3/8</div>
<div class="t" style="left:79px;top:617px;font-size:11px;color:#000;">11:19:43</div>
<div class="t" style="left:152px;top:617px;font-size:11px;color:#000;">操作信息</div>
<div class="t" style="left:225px;top:617px;font-size:11px;color:#000;">添加 99 个通信标签</div>
<svg style="left:5px;top:637px" width="11" height="11" viewBox="0 0 11 11"><path d="M3.2 0.3 H7.8 L10.7 3.2 V7.8 L7.8 10.7 H3.2 L0.3 7.8 V3.2 Z" fill="#7e0a0a"/><path d="M1.6 4.2 L5.4 2.6" stroke="#fff" stroke-width="1.6"/><path d="M4.2 3.6 L7.8 7.6" stroke="#fff" stroke-width="1.3"/></svg>
<div class="t" style="left:18px;top:635px;font-size:11px;color:#000;">2023/3/8</div>
<div class="t" style="left:79px;top:635px;font-size:11px;color:#000;">11:19:43</div>
<div class="t" style="left:152px;top:635px;font-size:11px;color:#000;">操作信息</div>
<div class="t" style="left:225px;top:635px;font-size:11px;color:#000;">当前所打开的工程文件，位于：&nbsp;I:\共享资料\PowerUnit<span style="letter-spacing:-0.6px">APC</span>Test_jianrongxingV321.prj</div>
<svg style="left:5px;top:654px" width="11" height="11" viewBox="0 0 11 11"><path d="M3.2 0.3 H7.8 L10.7 3.2 V7.8 L7.8 10.7 H3.2 L0.3 7.8 V3.2 Z" fill="#7e0a0a"/><path d="M1.6 4.2 L5.4 2.6" stroke="#fff" stroke-width="1.6"/><path d="M4.2 3.6 L7.8 7.6" stroke="#fff" stroke-width="1.3"/></svg>
<div class="t" style="left:18px;top:652px;font-size:11px;color:#000;">2023/3/8</div>
<div class="t" style="left:79px;top:652px;font-size:11px;color:#000;">11:19:43</div>
<div class="t" style="left:152px;top:652px;font-size:11px;color:#000;">操作信息</div>
<div class="t" style="left:225px;top:652px;font-size:11px;color:#000;">启动心跳监测功能</div>
<svg style="left:5px;top:672px" width="11" height="11" viewBox="0 0 11 11"><path d="M3.2 0.3 H7.8 L10.7 3.2 V7.8 L7.8 10.7 H3.2 L0.3 7.8 V3.2 Z" fill="#7e0a0a"/><path d="M1.6 4.2 L5.4 2.6" stroke="#fff" stroke-width="1.6"/><path d="M4.2 3.6 L7.8 7.6" stroke="#fff" stroke-width="1.3"/></svg>
<div class="t" style="left:18px;top:670px;font-size:11px;color:#000;">2023/3/8</div>
<div class="t" style="left:79px;top:670px;font-size:11px;color:#000;">11:19:48</div>
<div class="t" style="left:152px;top:670px;font-size:11px;color:#000;">操作信息</div>
<div class="t" style="left:225px;top:670px;font-size:11px;color:#000;">工程师：&nbsp;eng 登录</div>
<div class="a" style="left:2px;top:728px;width:1398px;height:15px;background:#f0f0f0;"></div>
<div class="a" style="left:17px;top:729px;width:1248px;height:13px;background:#cdcdcd;"></div>
<svg style="left:4px;top:731px" width="8" height="10" viewBox="0 0 8 10"><path d="M5.5 1.5 L2 5 L5.5 8.5" fill="none" stroke="#606060" stroke-width="1.3"/></svg>
<svg style="left:1388px;top:731px" width="8" height="10" viewBox="0 0 8 10"><path d="M2.5 1.5 L6 5 L2.5 8.5" fill="none" stroke="#606060" stroke-width="1.3"/></svg>
<div class="a" style="left:0px;top:743px;width:1402px;height:1px;background:#dcdcdc;"></div>
<div class="a" style="left:0px;top:744px;width:1402px;height:17px;background:#f0f0f0;"></div>
<div class="a" style="left:0px;top:744px;width:1402px;height:1px;background:#f8f8f8;"></div>
<div class="t" style="left:1060px;top:748px;font-size:11px;color:#000;">控制器(组)或软测量： 锅炉<span style="letter-spacing:-0.6px">APC</span>控制器</div>
<div class="a" style="left:1293px;top:746px;width:1px;height:15px;background:#d6d6d6;"></div>
<div class="t" style="left:1296px;top:748px;font-size:11px;color:#000;">组态模式</div>
<div class="a" style="left:1354px;top:746px;width:1px;height:15px;background:#d6d6d6;"></div>
<div class="t" style="left:1357px;top:748px;font-size:11px;color:#000;">未就绪</div>
<div class="a" style="left:1393px;top:694px;width:6px;height:54px;border-radius:3px;background:linear-gradient(180deg,#a6a6a6 0,#a6a6a6 50%,#1fae55 50%,#2cc766 60%,#6ee68f 100%);box-shadow:0 0 3px rgba(0,0,0,0.15)"></div>
<div class="a" style="left:475px;top:208px;width:452px;height:340px;box-shadow:1px 1px 6px rgba(0,0,0,0.3)"></div>
<div class="a" style="left:475px;top:208px;width:452px;height:339px;background:#9a9a9a;"></div>
<div class="a" style="left:476px;top:209px;width:450px;height:337px;background:#f0f0f0;"></div>
<div class="a" style="left:476px;top:209px;width:450px;height:27px;background:#fff;"></div>
<div class="t" style="left:481px;top:215px;font-size:11px;color:#000;">选择点</div>
<svg style="left:907px;top:217px" width="10" height="10" viewBox="0 0 10 10"><path d="M0.5 0.5 L9.5 9.5 M9.5 0.5 L0.5 9.5" stroke="#222" stroke-width="1"/></svg>
<div class="a" style="left:481px;top:246px;width:442px;height:40px;border:1px solid #dcdcdc;border-radius:2px"></div>
<div class="a" style="left:485px;top:239px;width:47px;height:12px;background:#f0f0f0;"></div>
<div class="t" style="left:487px;top:238px;font-size:11px;color:#000;letter-spacing:0.4px">查找条件</div>
<div class="t" style="left:492px;top:259px;font-size:11px;color:#000;letter-spacing:0.6px">点名：</div>
<div class="a" style="left:525px;top:257px;width:157px;height:20px;border:1px solid #7a7a7a;background:#fff;overflow:hidden"></div>
<div class="t" style="left:528px;top:257px;font-size:9.4px;color:#000;width:152px;overflow:hidden;font-family:Liberation Sans;letter-spacing:-0.15px">OutputData_App2OPC.Furnace_out.7</div>
<div class="a" style="left:696px;top:260px;width:13px;height:13px;border:1px solid #5a5a5a;border-radius:1px;background:#fff"></div>
<div class="t" style="left:710px;top:259px;font-size:11px;color:#000;width:136px;overflow:hidden;letter-spacing:0.3px">点名称一致（不区分大小写）</div>
<div class="a" style="left:847px;top:258px;width:63px;height:20px;border:1px solid #adadad;background:#e1e1e1"></div>
<div class="t" style="left:867px;top:260px;font-size:11px;color:#000;letter-spacing:0px">查找</div>
<div class="t" style="left:484px;top:292px;font-size:11px;color:#000;">通讯点列</div>
<div class="t" style="left:697px;top:292px;font-size:11px;color:#000;">查找结</div>
<div class="a" style="left:483px;top:315px;width:205px;height:188px;border:1px solid #a0a0a0;background:#fff"></div>
<div class="a" style="left:484px;top:316px;width:188px;height:171px;overflow:hidden">
<div class="t" style="left:2px;top:0px;font-size:9.4px;color:#000;font-family:Liberation Sans">..</div>
<div class="t" style="left:2px;top:11px;font-size:9.4px;color:#000;font-family:Liberation Sans">Controllers State.boiler side controllers ask</div>
<div class="t" style="left:2px;top:23px;font-size:9.4px;color:#000;font-family:Liberation Sans">Controllers State.boiler side controllers ready</div>
<div class="t" style="left:2px;top:35px;font-size:9.4px;color:#000;font-family:Liberation Sans">Controllers State.boiler side controllers run</div>
<div class="t" style="left:2px;top:46px;font-size:9.4px;color:#000;font-family:Liberation Sans">Controllers State.Communication Signal</div>
<div class="t" style="left:2px;top:58px;font-size:9.4px;color:#000;font-family:Liberation Sans">Controllers State.coordinated controllers ask</div>
<div class="t" style="left:2px;top:70px;font-size:9.4px;color:#000;font-family:Liberation Sans">Controllers State.coordinated controllers ready</div>
<div class="t" style="left:2px;top:81px;font-size:9.4px;color:#000;font-family:Liberation Sans">Controllers State.coordinated controllers run</div>
<div class="t" style="left:2px;top:93px;font-size:9.4px;color:#000;font-family:Liberation Sans">Controllers State.temp controllers ask</div>
<div class="t" style="left:2px;top:105px;font-size:9.4px;color:#000;font-family:Liberation Sans">Controllers State.temp controllers ready</div>
<div class="t" style="left:2px;top:116px;font-size:9.4px;color:#000;font-family:Liberation Sans">Controllers State.temp controllers run</div>
<div class="t" style="left:2px;top:128px;font-size:9.4px;color:#000;font-family:Liberation Sans">InputData_OPC2App.BoilerSide.Coal_V</div>
<div class="t" style="left:2px;top:140px;font-size:9.4px;color:#000;font-family:Liberation Sans">InputData_OPC2App.BoilerSide.FeedPump</div>
<div class="t" style="left:2px;top:152px;font-size:9.4px;color:#000;font-family:Liberation Sans">InputData_OPC2App.FAN.ID_V</div>
<div class="t" style="left:2px;top:163px;font-size:9.4px;color:#000;font-family:Liberation Sans">InputData_OPC2App.FAN.PA_V</div>
</div>
<div class="a" style="left:672px;top:316px;width:15px;height:171px;background:#f0f0f0;"></div>
<div class="a" style="left:673px;top:331px;width:13px;height:20px;background:#cdcdcd;"></div>
<svg style="left:674px;top:320px" width="10" height="8" viewBox="0 0 10 8"><path d="M1.5 5.5 L5 2 L8.5 5.5" fill="none" stroke="#606060" stroke-width="1.3"/></svg>
<svg style="left:674px;top:474px" width="10" height="8" viewBox="0 0 10 8"><path d="M1.5 2.5 L5 6 L8.5 2.5" fill="none" stroke="#606060" stroke-width="1.3"/></svg>
<div class="a" style="left:484px;top:487px;width:188px;height:15px;background:#f0f0f0;"></div>
<div class="a" style="left:672px;top:487px;width:15px;height:15px;background:#f0f0f0;"></div>
<div class="a" style="left:500px;top:488px;width:94px;height:13px;background:#cdcdcd;"></div>
<svg style="left:488px;top:490px" width="8" height="10" viewBox="0 0 8 10"><path d="M5.5 1.5 L2 5 L5.5 8.5" fill="none" stroke="#606060" stroke-width="1.3"/></svg>
<svg style="left:659px;top:490px" width="8" height="10" viewBox="0 0 8 10"><path d="M2.5 1.5 L6 5 L2.5 8.5" fill="none" stroke="#606060" stroke-width="1.3"/></svg>
<div class="a" style="left:698px;top:315px;width:224px;height:158px;border:1px solid #a0a0a0;background:#fff"></div>
<div class="a" style="left:856px;top:481px;width:63px;height:18px;border:1px solid #0078d7;box-shadow:inset 0 0 0 1px #3c92dc;background:#e1e1e1"></div>
<div class="t" style="left:876px;top:482px;font-size:11px;color:#000;letter-spacing:0.3px">确定</div>
<div class="a" style="left:476px;top:509px;width:450px;height:1px;background:#a0a0a0;"></div>
<div class="a" style="left:476px;top:510px;width:450px;height:36px;background:#f0f0f0;"></div>
</body>
</html>
